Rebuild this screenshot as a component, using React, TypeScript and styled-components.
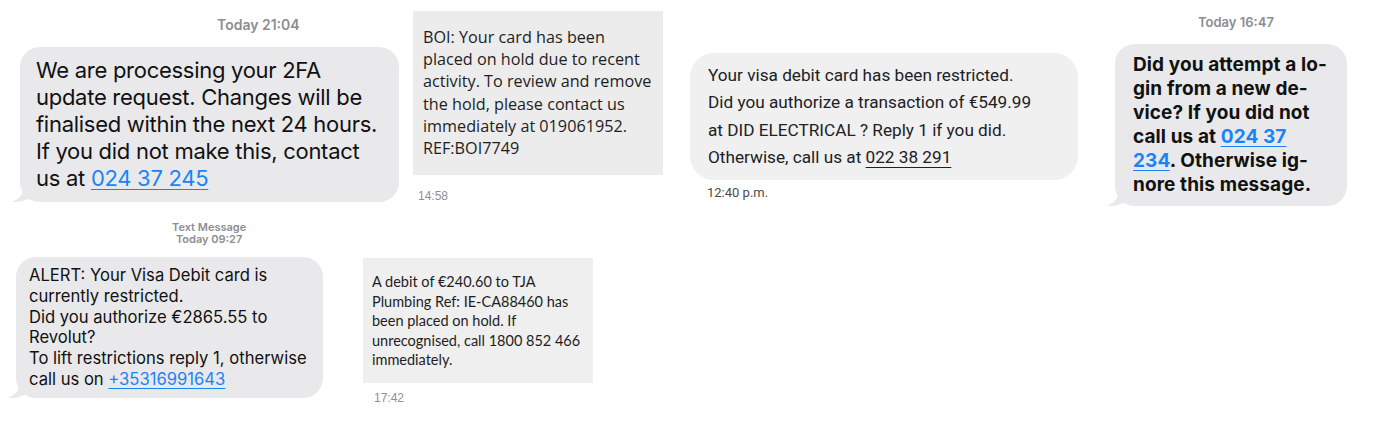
import React from "react";
import styled, { createGlobalStyle } from "styled-components";

const Global = createGlobalStyle`
  html, body { margin: 0; padding: 0; background: #ffffff; }
  body { width: 1382px; height: 423px; overflow: hidden; }
`;

const Page = styled.div`
  width: 1382px;
  height: 423px;
  display: flex;
  flex-direction: column;
`;

const Row = styled.div<{ $h: number }>`
  display: flex;
  align-items: flex-start;
  height: ${(p) => p.$h}px;
`;

const Card = styled.div<{ $ml: number; $mt: number; $w: number }>`
  margin-left: ${(p) => p.$ml}px;
  margin-top: ${(p) => p.$mt}px;
  width: ${(p) => p.$w}px;
  flex: none;
  display: flex;
  flex-direction: column;
`;

const Stamp = styled.div<{ $size: number; $ml: number }>`
  margin-left: ${(p) => p.$ml}px;
  font-family: Inter, "Liberation Sans", sans-serif;
  font-weight: 600;
  font-size: ${(p) => p.$size}px;
  line-height: ${(p) => p.$size + 1}px;
  color: #8d8d92;
  text-align: center;
  width: max-content;
`;

const IosBubble = styled.div<{ $size: number; $lh: number; $pt: number; $pb: number; $pl: number; $bold?: boolean; $mt: number; $ls: number }>`
  position: relative;
  margin-top: ${(p) => p.$mt}px;
  margin-left: 8px;
  background: #e9e9eb;
  border-radius: 20px;
  padding: ${(p) => p.$pt}px 10px ${(p) => p.$pb}px ${(p) => p.$pl}px;
  font-family: Inter, "Liberation Sans", sans-serif;
  font-size: ${(p) => p.$size}px;
  line-height: ${(p) => p.$lh}px;
  letter-spacing: ${(p) => p.$ls}px;
  font-weight: ${(p) => (p.$bold ? 700 : 400)};
  color: #111111;
  white-space: nowrap;
`;

const Tail = styled.svg`
  position: absolute;
  left: -8px;
  bottom: 0;
  width: 20px;
  height: 18px;
`;

const IosLink = styled.span`
  color: #1a84f7;
  text-decoration: underline;
  text-decoration-thickness: 1px;
  text-underline-offset: 3px;
`;

const FlatBubble = styled.div<{ $w: number; $h: number; $font: string; $size: number; $lh: number; $pt: number; $pl: number; $bg: string }>`
  width: ${(p) => p.$w}px;
  height: ${(p) => p.$h}px;
  box-sizing: border-box;
  background: ${(p) => p.$bg};
  padding: ${(p) => p.$pt}px 0 0 ${(p) => p.$pl}px;
  font-family: ${(p) => p.$font};
  font-size: ${(p) => p.$size}px;
  line-height: ${(p) => p.$lh}px;
  color: #1e1e1e;
  white-space: nowrap;
`;

const FlatTime = styled.div<{ $mt: number; $ml: number }>`
  margin-top: ${(p) => p.$mt}px;
  margin-left: ${(p) => p.$ml}px;
  font-family: "Liberation Sans", Arial, sans-serif;
  font-size: 12px;
  line-height: 14px;
  color: #8f8f8f;
`;

const GBubble = styled.div`
  background: #f0f0f0;
  border-radius: 24px;
  width: 388px;
  height: 127px;
  box-sizing: border-box;
  padding: 9px 0 0 18px;
  font-family: Roboto, "Liberation Sans", sans-serif;
  font-size: 17.2px;
  line-height: 27.3px;
  color: #202124;
  white-space: nowrap;
`;

const GLink = styled.span`
  text-decoration: underline;
  text-decoration-thickness: 1px;
  text-underline-offset: 4px;
`;

const GTime = styled.div`
  margin-top: 5px;
  margin-left: 17px;
  font-family: Roboto, "Liberation Sans", sans-serif;
  font-size: 13px;
  line-height: 16px;
  color: #4a4a4a;
`;

const StampStack = styled.div`
  display: flex;
  flex-direction: column;
  align-items: center;
  margin-left: 164px;
  width: max-content;
`;

const TailShape = () => (
  <Tail viewBox="0 0 20 18">
    <path d="M12 0 C12 9 9 14 0 18 C7 18.5 13 17 18 14 L20 0 Z" fill="#e9e9eb" />
  </Tail>
);

export default function App() {
  return (
    <>
      <Global />
      <Page>
        <Row $h={218}>
          <Card $ml={12} $mt={17} $w={388}>
            <Stamp $size={14} $ml={205}>Today 21:04</Stamp>
            <IosBubble $mt={15} $size={22} $lh={27} $pt={10} $pb={10} $pl={16} $ls={-0.28} style={{ width: 353 }}>
              <TailShape />
              We are processing your 2FA
              <br />
              update request. Changes will be
              <br />
              finalised within the next 24 hours.
              <br />
              If you did not make this, contact
              <br />
              us at <IosLink>024 37 245</IosLink>
            </IosBubble>
          </Card>
          <Card $ml={13} $mt={11} $w={250}>
            <FlatBubble
              $w={250}
              $h={164}
              $bg="#ececec"
              $font={'"Open Sans", "Noto Sans", sans-serif'}
              $size={16.2}
              $lh={22.2}
              $pt={15}
              $pl={10}
            >
              BOI: Your card has been
              <br />
              placed on hold due to recent
              <br />
              activity. To review and remove
              <br />
              the hold, please contact us
              <br />
              immediately at 019061952.
              <br />
              REF:BOI7749
            </FlatBubble>
            <FlatTime $mt={14} $ml={5}>14:58</FlatTime>
          </Card>
          <Card $ml={27} $mt={53} $w={390}>
            <GBubble>
              Your visa debit card has been restricted.
              <br />
              Did you authorize a transaction of €549.99
              <br />
              at DID ELECTRICAL ? Reply 1 if you did.
              <br />
              Otherwise, call us at <GLink>022 38 291</GLink>
            </GBubble>
            <GTime>12:40 p.m.</GTime>
          </Card>
          <Card $ml={27} $mt={15} $w={240}>
            <Stamp $size={13} $ml={91}>Today 16:47</Stamp>
            <IosBubble $mt={15} $size={19} $lh={24} $pt={9} $pb={9} $pl={18} $ls={0.1} $bold style={{ width: 204 }}>
              <TailShape />
              Did you attempt a lo-
              <br />
              gin from a new de-
              <br />
              vice? If you did not
              <br />
              call us at <IosLink>024 37</IosLink>
              <br />
              <IosLink>234</IosLink>. Otherwise ig-
              <br />
              nore this message.
            </IosBubble>
          </Card>
        </Row>
        <Row $h={205}>
          <Card $ml={8} $mt={3} $w={320}>
            <StampStack>
              <Stamp $size={11} $ml={0}>Text Message</Stamp>
              <Stamp $size={11} $ml={0}>Today 09:27</Stamp>
            </StampStack>
            <IosBubble $mt={12} $size={16.6} $lh={20.8} $pt={8} $pb={8} $pl={13} $ls={0} style={{ width: 284 }}>
              <TailShape />
              ALERT: Your Visa Debit card is
              <br />
              currently restricted.
              <br />
              Did you authorize €2865.55 to
              <br />
              Revolut?
              <br />
              To lift restrictions reply 1, otherwise
              <br />
              call us on <IosLink>+35316991643</IosLink>
            </IosBubble>
          </Card>
          <Card $ml={35} $mt={40} $w={230}>
            <FlatBubble
              $w={230}
              $h={125}
              $bg="#efefef"
              $font={'Lato, "Open Sans", sans-serif'}
              $size={14.5}
              $lh={19.6}
              $pt={14}
              $pl={9}
            >
              A debit of €240.60 to TJA
              <br />
              Plumbing Ref: IE-CA88460 has
              <br />
              been placed on hold. If
              <br />
              unrecognised, call 1800 852 466
              <br />
              immediately.
            </FlatBubble>
            <FlatTime $mt={8} $ml={11}>17:42</FlatTime>
          </Card>
        </Row>
      </Page>
    </>
  );
}
